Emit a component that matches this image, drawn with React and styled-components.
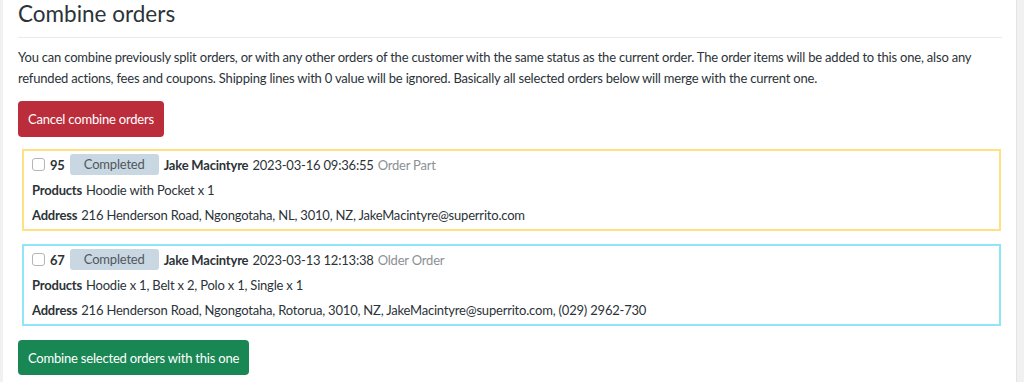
import React from 'react';
import styled, { createGlobalStyle } from 'styled-components';

const GlobalStyle = createGlobalStyle`
  html, body {
    margin: 0;
    padding: 0;
    background: #f1f1f1;
  }
  body {
    font-family: Lato, "Noto Sans", sans-serif;
    color: #2c3338;
    letter-spacing: -0.2px;
  }
`;

const Page = styled.div`
  display: flex;
  padding: 0 7px 0 3px;
  height: 382px;
  box-sizing: border-box;
  overflow: hidden;
`;

const Panel = styled.div`
  flex: 1;
  background: #fff;
  border-right: 1px solid #e4e4e4;
  padding: 0 14px 0 15px;
`;

const Heading = styled.h2`
  margin: 0;
  height: 27px;
  padding: 0 0 10px;
  font-size: 22.5px;
  font-weight: 400;
  color: #2c3338;
  border-bottom: 1px solid #eaeaea;
  line-height: 27px;
  letter-spacing: 0;
`;

const Intro = styled.p`
  margin: 9px 0 12px;
  font-size: 13px;
  line-height: 21px;
`;

const Button = styled.button`
  display: block;
  border: none;
  border-radius: 4px;
  padding: 0 10px;
  height: ${p => (p.$variant === 'danger' ? '36px' : '35px')};
  font-family: inherit;
  font-size: 13px;
  letter-spacing: inherit;
  color: #fff;
  background: ${p => (p.$variant === 'danger' ? '#bb2d3b' : '#198754')};
  cursor: pointer;
`;

const Card = styled.div`
  margin: 12px 0 0 4px;
  width: 979px;
  box-sizing: border-box;
  border: 2px solid ${p => (p.$tone === 'warning' ? '#ffe083' : '#8fe6f9')};
  padding: 1px 8px 2px;
  font-size: 13px;
  & + & {
    margin-top: 13px;
  }
`;

const Line = styled.div`
  display: flex;
  align-items: center;
  gap: 4px;
  height: 25px;
  white-space: nowrap;
`;

const Check = styled.input.attrs({ type: 'checkbox' })`
  appearance: none;
  width: 13px;
  height: 13px;
  margin: 0 1px 0 0;
  border: 1px solid #b5b5b5;
  border-radius: 3px;
  background: #fff;
`;

const Badge = styled.span`
  display: inline-block;
  background: #c8d7e1;
  color: #50575e;
  border-radius: 3px;
  width: 89px;
  text-align: center;
  line-height: 21px;
  margin: 0 1px;
`;

const Muted = styled.span`
  color: #8c8f94;
`;

const Footer = styled.div`
  margin-top: 14px;
`;

const orders = [
  {
    id: 95,
    tone: 'warning',
    customer: 'Jake Macintyre',
    date: '2023-03-16 09:36:55',
    kind: 'Order Part',
    products: 'Hoodie with Pocket x 1',
    address: '216 Henderson Road, Ngongotaha, NL, 3010, NZ, JakeMacintyre@superrito.com',
  },
  {
    id: 67,
    tone: 'info',
    customer: 'Jake Macintyre',
    date: '2023-03-13 12:13:38',
    kind: 'Older Order',
    products: 'Hoodie x 1, Belt x 2, Polo x 1, Single x 1',
    address: '216 Henderson Road, Ngongotaha, Rotorua, 3010, NZ, JakeMacintyre@superrito.com, (029) 2962-730',
  },
];

const App = () => (
  <>
    <GlobalStyle />
    <Page>
      <Panel>
        <Heading>Combine orders</Heading>
        <Intro>
          You can combine previously split orders, or with any other orders of the customer with the same status as the current order. The order items will be added to this one, also any refunded actions, fees and coupons. Shipping lines with 0 value will be ignored. Basically all selected orders below will merge with the current one.
        </Intro>
        <Button $variant="danger">Cancel combine orders</Button>
        {orders.map(order => (
          <Card key={order.id} $tone={order.tone}>
            <Line>
              <Check />
              <b>{order.id}</b>
              <Badge>Completed</Badge>
              <b>{order.customer}</b>
              <span>{order.date}</span>
              <Muted>{order.kind}</Muted>
            </Line>
            <Line>
              <b>Products</b>
              <span>{order.products}</span>
            </Line>
            <Line>
              <b>Address</b>
              <span>{order.address}</span>
            </Line>
          </Card>
        ))}
        <Footer>
          <Button $variant="success">Combine selected orders with this one</Button>
        </Footer>
      </Panel>
    </Page>
  </>
);

export default App;
